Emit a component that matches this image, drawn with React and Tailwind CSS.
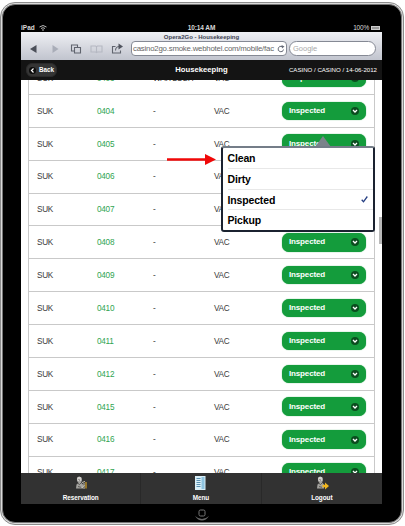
import React from "react";

const ROOMS = ["0403", "0404", "0405", "0406", "0407", "0408", "0409", "0410", "0411", "0412", "0415", "0416", "0417"];
const OPTIONS = ["Clean", "Dirty", "Inspected", "Pickup"];

function StatusButton() {
  return (
    <div className="flex h-[18.5px] w-[84px] items-center justify-between rounded-[7px] bg-[#149c3c] pl-[7.5px] pr-[7px] text-[8px] font-bold tracking-[-0.15px] text-white shadow-[0_0_1px_#149c3c]">
      <span>Inspected</span>
      <svg className="h-[8px] w-[8px]" viewBox="0 0 8 8">
        <circle cx="4" cy="4" r="4" fill="#0b4d1f" />
        <path d="M2 3l2 2 2-2" fill="none" stroke="#fff" strokeWidth="1.3" />
      </svg>
    </div>
  );
}

function RoomRow({ room, note }) {
  return (
    <div className="flex h-[32.88px] shrink-0 items-center border-b border-[#c9c9c9] text-[8.2px] tracking-[-0.25px] text-[#3a3a3a]">
      <span className="w-[68px] pl-[8px] pt-[2px]">SUK</span>
      <span className="w-[56px] pt-[2px] text-[#2fa451]">{room}</span>
      <span className="w-[61px] whitespace-nowrap pt-[2px]">{note}</span>
      <span className="w-[67.5px] pt-[2px]">VAC</span>
      <StatusButton />
    </div>
  );
}

function Person({ children }) {
  return (
    <svg className="h-[14px] w-[14px]" viewBox="0 0 14 14">
      <path d="M2 12.500l.5-4 2-1.500-1.500-2 .5-3.500L5 .5l2.500 1L8 4.500 7 6.500l2 2v4z" fill="#a3a29e" />
      <circle cx="5.200" cy="3" r="2.300" fill="#d0cecb" />
      <path d="M3.500 7l2 1.500L7 7M4.500 3.500l1.500.8M4 10.500l3 .8" fill="none" stroke="#4b4946" strokeWidth=".8" />
      {children}
    </svg>
  );
}

function FooterItem({ label, children, className }) {
  return (
    <div className={`flex flex-col items-center pt-[3px] ${className}`}>
      {children}
      <span className="mt-[2.5px] text-[6.4px] font-bold leading-[9px] tracking-[-0.05px] text-white">{label}</span>
    </div>
  );
}

export default function App() {
  return (
    <div className="h-[526px] w-[405px] overflow-hidden bg-white pt-[2px] font-['Liberation_Sans',Arial,sans-serif]">
      <div className="flex h-[523px] w-[404px] flex-col rounded-[15px] border border-[#8c8c8c] bg-[#dadada] p-[1px]">
        <div className="flex min-h-0 grow flex-col rounded-[13px] border border-[#777] bg-black pl-[18px] pr-[19px]">
          <div className="grid h-[27px] shrink-0 grid-cols-3 items-end text-[6.5px] font-bold leading-[8px] text-[#d8d8d8]">
            <div className="flex items-center gap-[4px]">
              <span>iPad</span>
              <svg className="h-[6px] w-[8px]" viewBox="0 0 8 6" fill="none" stroke="#ccc" strokeWidth=".9">
                <path d="M.5 2Q4-1 7.5 2M2 3.500q2-1.600 4 0" />
                <circle cx="4" cy="5" r=".4" />
              </svg>
            </div>
            <span className="text-center tracking-[-0.1px]">10:14 AM</span>
            <div className="flex items-center justify-end gap-[2px] pr-[2px] font-normal tracking-[-0.2px]">
              <span>100%</span>
              <span className="h-[4px] w-[9px] border border-[#ccc] bg-[#999]" />
            </div>
          </div>

          <div className="h-[28px] w-full shrink-0 bg-linear-to-b from-[#eff0f4] to-[#c1c4ce]">
            <div className="h-[9px] text-center text-[6px] font-bold leading-[10px] text-[#3d4252]">Opera2Go - Housekeeping</div>
            <div className="flex h-[15px] items-center">
              <svg className="h-[14px] w-[110px] shrink-0" viewBox="0 0 110 14" fill="none" stroke="#60646e" strokeWidth="1.1">
                <path d="M15.500 3v8l-6.500-4z" fill="#4b4f59" stroke="none" />
                <path d="M31.500 3v8l6-4z" fill="#a9adb8" stroke="none" />
                <path d="M53.500 9h-3V3h6v2.500M53.500 5.500h6v5.500h-6z" />
                <path d="M70 4h4.500l1 .7 1-.7H81v6h-4.500l-1 .7-1-.7H70zM75.500 5v5" stroke="#b5b8c2" />
                <path d="M94.500 4.500H91.500v6.500h8V8.500M94.500 8.500c0-3 2-4 4-4" />
                <path d="M97.500 1.500l4.500 3-4.500 3z" fill="#50545e" stroke="none" />
              </svg>
              <div className="flex h-[15px] w-[156px] items-center rounded-[4px] border border-[#858994] bg-white px-[1px]">
                <span className="w-[142px] shrink-0 whitespace-nowrap text-[7.8px] tracking-[-0.2px] text-[#666]">casino2go.smoke.webhotel.com/mobile/fac</span>
                <svg className="ml-[2px] h-[8px] w-[8px] shrink-0" viewBox="0 0 8 8">
                  <path d="M6.500 4.500A2.700 2.700 0 1 1 5 1.600" fill="none" stroke="#666b78" />
                  <path d="M4.500 0L7.500 1.500 5 3.500z" fill="#666b78" />
                </svg>
              </div>
              <div className="ml-[2px] h-[15px] w-[87px] rounded-full border border-[#858994] bg-white pl-[3px] text-[7.500px] leading-[13px] text-[#aaa]">Google</div>
            </div>
          </div>

          <header className="grid h-[20px] w-full shrink-0 grid-cols-[110px_1fr_110px] items-center bg-[#141414] text-[7.7px] font-bold text-white">
            <div className="ml-[5px] flex h-[14px] w-[31px] items-center gap-[3px] rounded-[6px] border border-[#2a2a2a] bg-[#353535] pl-[2px] text-[6.300px]">
              <svg className="h-[7px] w-[7px]" viewBox="0 0 7 7">
                <circle cx="3.500" cy="3.500" r="3.500" fill="#0b0b0b" />
                <path d="M4.500 1.500l-2 2 2 2" fill="none" stroke="#fff" strokeWidth="1.200" />
              </svg>
              Back
            </div>
            <span className="text-center">Housekeeping</span>
            <span className="whitespace-nowrap pr-[5px] text-right text-[6.100px] font-normal">CASINO / CASINO / 14-06-2012</span>
          </header>

          <main className="relative h-[393px] shrink-0 overflow-hidden bg-white">
            <div className="ml-[7px] mt-[-18px] flex w-[347px] flex-col border-x border-[#c9c9c9]">
              {ROOMS.map((room, i) => (
                <RoomRow key={room} room={room} note={i === 0 ? "WAITLOSH" : "-"} />
              ))}
            </div>
            <div className="absolute left-[358px] top-[137px] h-[27px] w-[3px] bg-[#b9b9b9]" />
            <svg className="absolute left-[146px] top-[74px] h-[11px] w-[49px]" viewBox="0 0 49 11">
              <path d="M0 4.300h38V0l11 5.500L38 11V6.700H0z" fill="#f00808" />
            </svg>
            <svg className="absolute left-[294px] top-[56px] h-[11px] w-[16px]" viewBox="0 0 16 11">
              <path d="M0 11L8 0l8 11z" fill="#7b838b" />
            </svg>
            <div className="absolute left-[200px] top-[66px] flex h-[86px] w-[154px] flex-col rounded-[3px] border-2 border-[#1b2230] border-t-[#747d88] bg-white pl-[4.500px]">
              {OPTIONS.map((option) => (
                <div key={option} className="flex flex-1 items-center justify-between border-b border-[#e8e8e8] pr-[5px] pt-[1px] text-[10.500px] font-bold leading-none tracking-[-0.15px] text-black last:border-0">
                  {option}
                  {option === "Inspected" && (
                    <svg className="h-[7px] w-[7px]" viewBox="0 0 7 7">
                      <path d="M.7 3.800l1.800 2L6.300.5" fill="none" stroke="#263f83" strokeWidth="1.300" />
                    </svg>
                  )}
                </div>
              ))}
            </div>
          </main>

          <footer className="grid h-[31px] w-full shrink-0 grid-cols-3 bg-[#323232]">
            <FooterItem label="Reservation" className="border-r border-[#292929]">
              <Person>
                <path d="M8 6.500l3-1M10 7v6M8 12l2.500-3" fill="none" stroke="#c8c4b5" />
                <path d="M12 6v6.500" stroke="#d7a226" strokeWidth="1.200" />
              </Person>
            </FooterItem>
            <FooterItem label="Menu" className="border-r border-[#292929]">
              <svg className="h-[14px] w-[11px]" viewBox="0 0 11 14">
                <path d="M0 0h10.500v14H0z" fill="#d8eef7" />
                <path d="M6.500 1h3v12h-3z" fill="#8fc4e0" />
                <path d="M1.500 2.500h4m-4 2h4m-4 2h4m-4 2h4m-4 2h4" stroke="#38779e" strokeWidth=".8" />
              </svg>
            </FooterItem>
            <FooterItem label="Logout" className="">
              <Person>
                <path d="M7.500 8.800h2.500V6.500l4 3.500-4 3.500v-2.300H7.500z" fill="#f0b51e" />
              </Person>
            </FooterItem>
          </footer>
          <div className="flex grow justify-center pt-[5px]">
            <svg className="h-[12px] w-[18px]" viewBox="0 0 18 12" fill="none">
              <rect x="6" y="1" width="6" height="6" rx="1.500" stroke="#777" />
              <path d="M2 7q7 6 14 0-3 4.500-7 4.500T2 7z" fill="#686868" />
            </svg>
          </div>
        </div>
      </div>
    </div>
  );
}
